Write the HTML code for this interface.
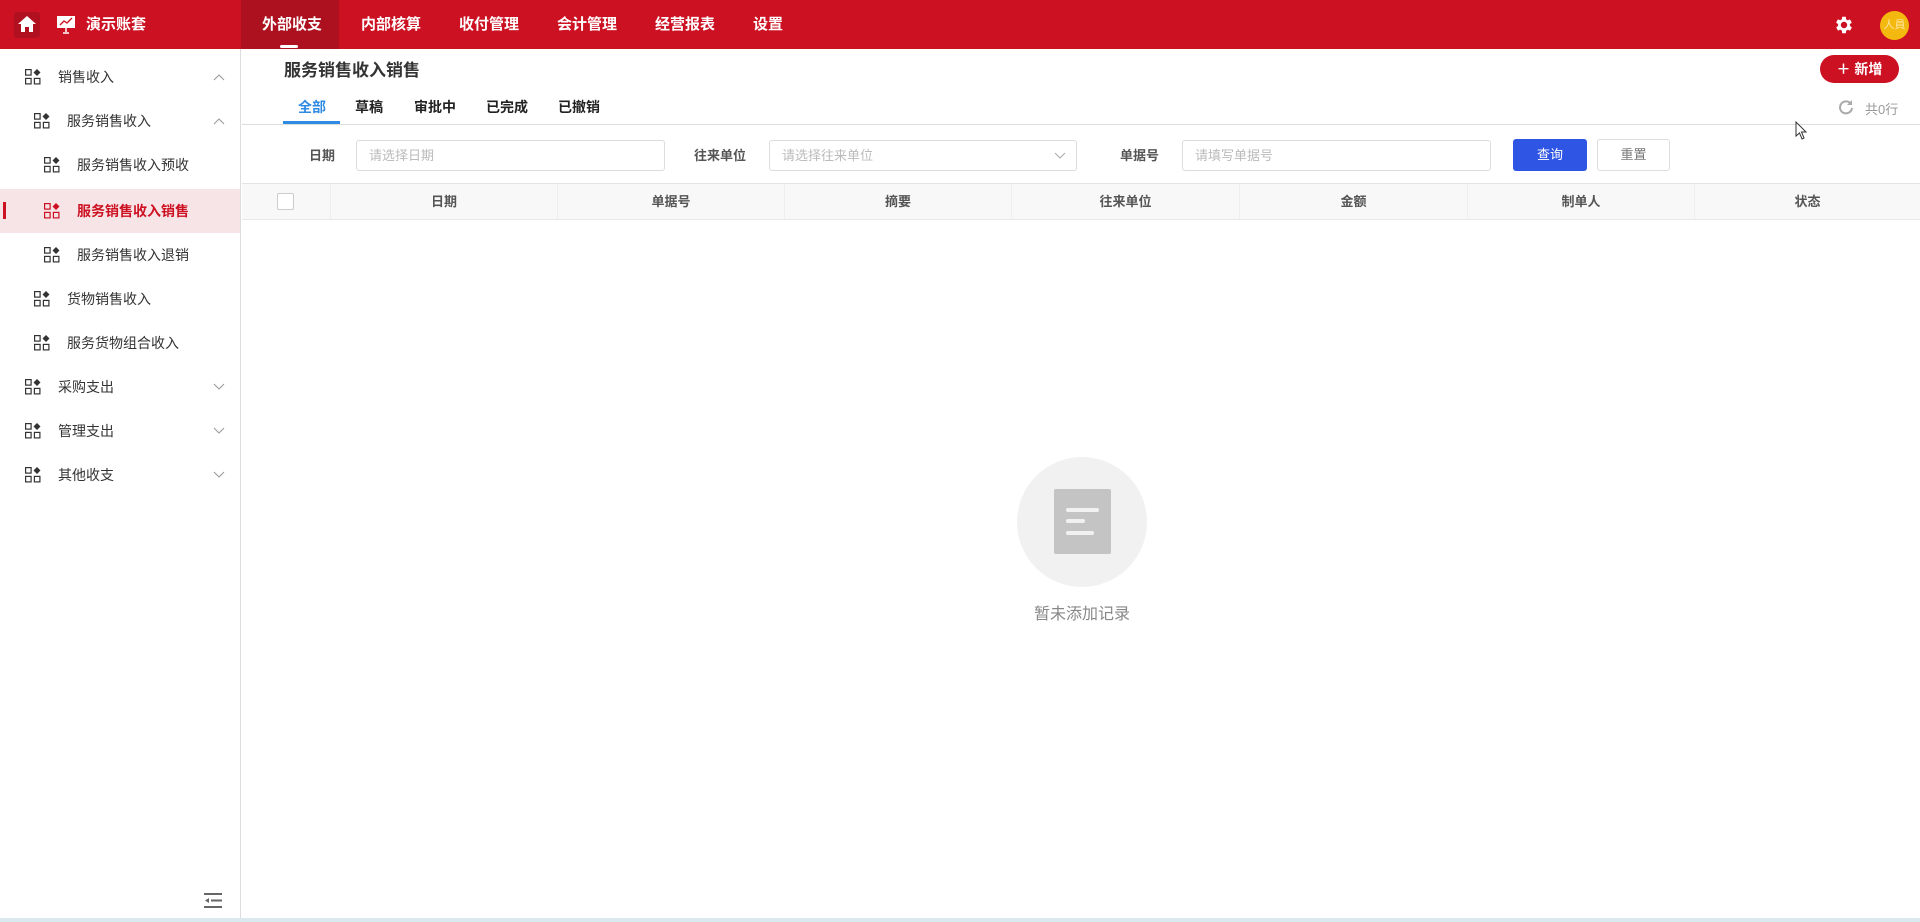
<!DOCTYPE html>
<html><head><meta charset="utf-8"><style>
*{margin:0;padding:0;box-sizing:border-box}
body{width:1920px;height:922px;overflow:hidden;background:#fff;font-family:"Liberation Sans","Noto Sans CJK SC",sans-serif;color:#333;position:relative;white-space:nowrap}
.hdr{position:absolute;left:0;top:0;width:1920px;height:49px;background:#cc1222}
.hdr .t{position:absolute;top:0;height:49px;line-height:49px;color:#fff;font-size:15px;font-weight:bold}
.act{position:absolute;left:241px;top:0;width:98px;height:49px;background:#ad111f}
.side{position:absolute;left:0;top:49px;width:241px;height:869px;border-right:1px solid #ddd;background:#fff}
.it{position:absolute;left:0;width:240px;height:44px;line-height:44px;font-size:14px;color:#333}
.it svg.ic{position:absolute;top:14px}
.it .tx{position:absolute}
.chev{position:absolute;left:213px;top:18px}
.inp{position:absolute;top:140px;height:31px;border:1px solid #dcdcdc;border-radius:3px;font-size:13px;color:#bbb;line-height:29px;padding-left:12px}
.lbl{position:absolute;top:140px;line-height:31px;font-size:13px;color:#555;font-weight:bold}
.th{position:absolute;top:184px;height:35px;line-height:35px;font-size:13px;color:#555;font-weight:bold;text-align:center;border-right:1px solid #eee}
</style></head><body>
<div class="hdr">
 <div style="position:absolute;left:14px;top:12px;width:26px;height:26px;background:#b01020;border-radius:3px"></div>
 <svg style="position:absolute;left:17px;top:14px" width="20" height="20" viewBox="0 0 20 20"><path d="M10 2 L19 10 H16 V18 H12 V13 H8 V18 H4 V10 H1 Z" fill="#fff"/></svg>
 <svg style="position:absolute;left:56px;top:14px" width="20" height="20" viewBox="0 0 20 20"><rect x="1" y="2" width="18" height="12" fill="#fff"/><path d="M4 11 L8 7 L11 9 L16 4" stroke="#cc1222" stroke-width="1.3" fill="none"/><path d="M10 14 V18 M7 19 H13" stroke="#fff" stroke-width="1.5"/></svg>
 <div class="t" style="left:86px">演示账套</div>
 <div class="act"></div>
 <div style="position:absolute;left:280px;top:45px;width:18px;height:3px;background:#fff;border-radius:2px"></div>
 <div class="t" style="left:262px">外部收支</div>
 <div class="t" style="left:361px">内部核算</div>
 <div class="t" style="left:459px">收付管理</div>
 <div class="t" style="left:557px">会计管理</div>
 <div class="t" style="left:655px">经营报表</div>
 <div class="t" style="left:753px">设置</div>
 <svg style="position:absolute;left:1833px;top:14px" width="22" height="22" viewBox="0 0 24 24"><path fill="#fff" d="M19.4 13a7.5 7.5 0 000-2l2.1-1.6-2-3.5-2.5 1a7.6 7.6 0 00-1.7-1L15 3h-4l-.4 2.8a7.6 7.6 0 00-1.7 1l-2.5-1-2 3.5L6.6 11a7.5 7.5 0 000 2l-2.1 1.6 2 3.5 2.5-1a7.6 7.6 0 001.7 1L11 21h4l.4-2.8a7.6 7.6 0 001.7-1l2.5 1 2-3.5zM13 15.5a3.5 3.5 0 110-7 3.5 3.5 0 010 7z" transform="translate(-1 0)"/></svg>
 <div style="position:absolute;left:1880px;top:11px;width:29px;height:29px;border-radius:50%;background:#f4b90f;color:#fde39a;font-size:11px;line-height:29px;text-align:center">人員</div>
</div>

<div class="side">
 <svg width="0" height="0" style="position:absolute"><defs><g id="ic"><rect x="0.6" y="0.6" width="5.5" height="5.5" fill="none" stroke="currentColor" stroke-width="1.2"/><rect x="0.6" y="9.4" width="5.5" height="5.5" fill="none" stroke="currentColor" stroke-width="1.2"/><rect x="9.4" y="9.4" width="5.5" height="5.5" fill="none" stroke="currentColor" stroke-width="1.2"/><path d="M12 0 L15.5 3.5 L12 7 L8.5 3.5 Z" fill="currentColor"/></g></defs></svg>
 <div class="it" style="top:6px"><svg class="ic" style="left:25px;color:#333" width="16" height="16"><use href="#ic"/></svg><span class="tx" style="left:58px">销售收入</span><svg class="chev" width="12" height="8"><path d="M1 7 L6 2 L11 7" stroke="#999" fill="none"/></svg></div>
 <div class="it" style="top:50px"><svg class="ic" style="left:34px;color:#333" width="16" height="16"><use href="#ic"/></svg><span class="tx" style="left:67px">服务销售收入</span><svg class="chev" width="12" height="8"><path d="M1 7 L6 2 L11 7" stroke="#999" fill="none"/></svg></div>
 <div class="it" style="top:94px"><svg class="ic" style="left:44px;color:#333" width="16" height="16"><use href="#ic"/></svg><span class="tx" style="left:77px">服务销售收入预收</span></div>
 <div class="it" style="top:140px;background:#f7e4e7;color:#cc1222;font-weight:bold"><div style="position:absolute;left:3px;top:13px;width:3px;height:17px;background:#cc1222"></div><svg class="ic" style="left:44px;color:#cc1222" width="16" height="16"><use href="#ic"/></svg><span class="tx" style="left:77px">服务销售收入销售</span></div>
 <div class="it" style="top:184px"><svg class="ic" style="left:44px;color:#333" width="16" height="16"><use href="#ic"/></svg><span class="tx" style="left:77px">服务销售收入退销</span></div>
 <div class="it" style="top:228px"><svg class="ic" style="left:34px;color:#333" width="16" height="16"><use href="#ic"/></svg><span class="tx" style="left:67px">货物销售收入</span></div>
 <div class="it" style="top:272px"><svg class="ic" style="left:34px;color:#333" width="16" height="16"><use href="#ic"/></svg><span class="tx" style="left:67px">服务货物组合收入</span></div>
 <div class="it" style="top:316px"><svg class="ic" style="left:25px;color:#333" width="16" height="16"><use href="#ic"/></svg><span class="tx" style="left:58px">采购支出</span><svg class="chev" width="12" height="8"><path d="M1 1 L6 6 L11 1" stroke="#999" fill="none"/></svg></div>
 <div class="it" style="top:360px"><svg class="ic" style="left:25px;color:#333" width="16" height="16"><use href="#ic"/></svg><span class="tx" style="left:58px">管理支出</span><svg class="chev" width="12" height="8"><path d="M1 1 L6 6 L11 1" stroke="#999" fill="none"/></svg></div>
 <div class="it" style="top:404px"><svg class="ic" style="left:25px;color:#333" width="16" height="16"><use href="#ic"/></svg><span class="tx" style="left:58px">其他收支</span><svg class="chev" width="12" height="8"><path d="M1 1 L6 6 L11 1" stroke="#999" fill="none"/></svg></div>
 <svg style="position:absolute;left:203px;top:843px" width="20" height="17"><path d="M1 2 H19 M8 8.5 H19 M1 15 H19" stroke="#666" stroke-width="2"/><path d="M2 8.5 L6 6 V11 Z" fill="#666"/></svg>
</div>
<div style="position:absolute;left:0;top:918px;width:1920px;height:4px;background:#dbe8ef"></div>

<div style="position:absolute;left:284px;top:56px;font-size:17px;font-weight:bold;color:#333">服务销售收入销售</div>
<div style="position:absolute;left:1820px;top:55px;width:79px;height:28px;border-radius:14px;background:#cc1222;color:#fff;font-size:14px;font-weight:bold;line-height:28px;text-align:center">＋ 新增</div>
<div style="position:absolute;top:97px;left:0;font-size:14px;font-weight:bold;color:#222">
 <span style="position:absolute;left:298px;color:#2f8ae4">全部</span>
 <span style="position:absolute;left:355px">草稿</span>
 <span style="position:absolute;left:414px">审批中</span>
 <span style="position:absolute;left:486px">已完成</span>
 <span style="position:absolute;left:558px">已撤销</span>
</div>
<div style="position:absolute;left:283px;top:121px;width:57px;height:3px;background:#2f8ae4"></div>
<div style="position:absolute;left:242px;top:124px;width:1678px;height:1px;background:#ddd"></div>
<svg style="position:absolute;left:1838px;top:99px" width="16" height="16" viewBox="0 0 16 16"><path d="M13 5 A6 6 0 1 0 14 9" stroke="#aaa" stroke-width="2" fill="none"/><path d="M14 1 V6 H9 Z" fill="#aaa"/></svg>
<div style="position:absolute;left:1865px;top:99px;font-size:13px;color:#999">共0行</div>
<svg style="position:absolute;left:1795px;top:121px" width="14" height="20"><path d="M1 1 V15 L4.5 12 L7 18 L9 17 L6.5 11 H11 Z" fill="#fff" stroke="#333"/></svg>

<div class="lbl" style="left:309px">日期</div>
<div class="inp" style="left:356px;width:309px">请选择日期</div>
<div class="lbl" style="left:694px">往来单位</div>
<div class="inp" style="left:769px;width:308px">请选择往来单位<svg style="position:absolute;right:10px;top:11px" width="12" height="8"><path d="M1 1 L6 6 L11 1" stroke="#aaa" fill="none"/></svg></div>
<div class="lbl" style="left:1120px">单据号</div>
<div class="inp" style="left:1182px;width:309px">请填写单据号</div>
<div style="position:absolute;left:1513px;top:139px;width:74px;height:32px;background:#2f55e4;border-radius:3px;color:#fff;font-size:13px;line-height:32px;text-align:center">查询</div>
<div style="position:absolute;left:1597px;top:139px;width:73px;height:32px;border:1px solid #ddd;border-radius:3px;color:#777;font-size:13px;line-height:30px;text-align:center">重置</div>

<div style="position:absolute;left:242px;top:183px;width:1678px;height:37px;background:#f8f8f8;border-top:1px solid #e4e4e4;border-bottom:1px solid #e8e8e8"></div>
<div class="th" style="left:242px;width:89px"><div style="position:absolute;left:35px;top:9px;width:17px;height:17px;border:1px solid #ccc;background:#fff;border-radius:2px"></div></div>
<div class="th" style="left:331px;width:227px">日期</div>
<div class="th" style="left:558px;width:227px">单据号</div>
<div class="th" style="left:785px;width:227px">摘要</div>
<div class="th" style="left:1012px;width:228px">往来单位</div>
<div class="th" style="left:1240px;width:228px">金额</div>
<div class="th" style="left:1468px;width:227px">制单人</div>
<div class="th" style="left:1695px;width:225px;border:none">状态</div>

<div style="position:absolute;left:1017px;top:457px;width:130px;height:130px;border-radius:50%;background:#f1f1f1"></div>
<div style="position:absolute;left:1054px;top:489px;width:57px;height:65px;background:#c4c4c4;border-radius:2px"></div>
<div style="position:absolute;left:1066px;top:508px;width:33px;height:4px;background:#f1f1f1;border-radius:2px"></div>
<div style="position:absolute;left:1066px;top:519px;width:19px;height:4px;background:#f1f1f1;border-radius:2px"></div>
<div style="position:absolute;left:1066px;top:531px;width:28px;height:4px;background:#f1f1f1;border-radius:2px"></div>
<div style="position:absolute;left:1000px;top:600px;width:164px;text-align:center;font-size:16px;color:#888">暂未添加记录</div>
</body></html>
